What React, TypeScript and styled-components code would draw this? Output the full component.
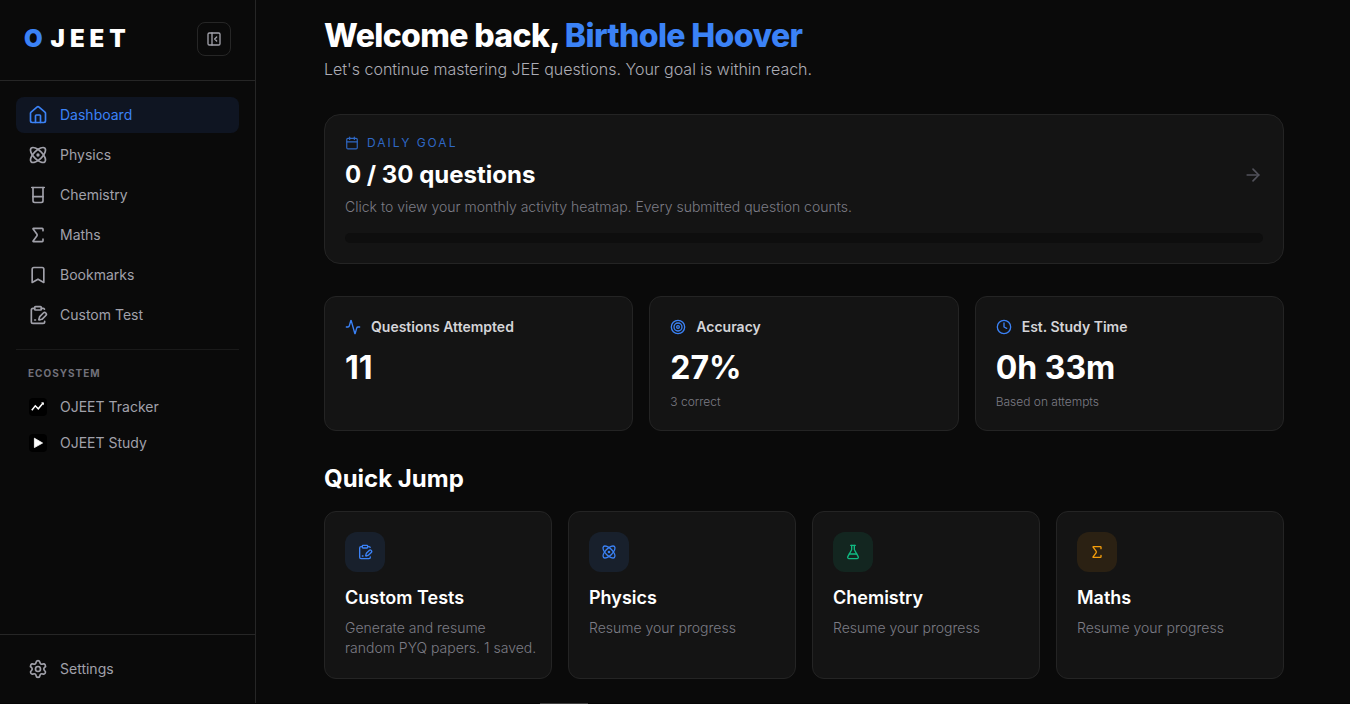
import React from "react";
import styled, { createGlobalStyle } from "styled-components";
import {
  Activity,
  ArrowRight,
  Atom,
  Beaker,
  Bookmark,
  Calendar,
  ClipboardPenLine,
  Clock,
  FlaskConical,
  House,
  PanelLeftClose,
  Settings,
  Sigma,
  Target,
  type LucideIcon,
} from "lucide-react";

const GlobalStyle = createGlobalStyle`
  *, *::before, *::after { box-sizing: border-box; }
  body {
    margin: 0;
    background: #0a0a0a;
    color: #ffffff;
    font-family: Inter, "Liberation Sans", sans-serif;
    font-size: 14px;
    line-height: 20px;
  }
  h1, h2, h3, p { margin: 0; }
  button { font: inherit; color: inherit; cursor: pointer; }
  a { color: inherit; text-decoration: none; }
`;

const Page = styled.div`
  display: flex;
  height: 100vh;
  overflow: hidden;
  border-bottom: 1px solid #050505;
`;

const Sidebar = styled.aside`
  display: flex;
  flex-direction: column;
  flex: none;
  width: 256px;
  border-right: 1px solid #262626;
`;

const SidebarHeader = styled.div`
  display: flex;
  align-items: center;
  justify-content: space-between;
  padding: 22px 24px 24px;
  border-bottom: 1px solid #262626;
`;

const Logo = styled.a`
  display: flex;
  gap: 3px;
  font-size: 24px;
  line-height: 32px;
  font-weight: 900;
  letter-spacing: 5px;
`;

const Accent = styled.span`
  color: #3b82f6;
`;

const CollapseButton = styled.button`
  display: grid;
  place-items: center;
  width: 34px;
  height: 34px;
  padding: 0;
  border: 1px solid #262626;
  border-radius: 8px;
  background: transparent;
  color: #a1a1aa;
`;

const Nav = styled.nav`
  display: flex;
  flex: 1;
  flex-direction: column;
  gap: 4px;
  padding: 16px;
`;

const NavLink = styled.a<{ $active?: boolean }>`
  display: flex;
  align-items: center;
  gap: 12px;
  padding: 8px 12px;
  border-radius: 8px;
  color: ${(p) => (p.$active ? "#3b82f6" : "#a1a1aa")};
  background: ${(p) => (p.$active ? "#0f1522" : "transparent")};

  svg { flex: none; }
`;

const Ecosystem = styled.div`
  margin-top: 12px;
  padding-top: 16px;
  border-top: 1px solid #1a1a1a;
`;

const EcosystemTitle = styled.h2`
  padding: 0 12px;
  margin-bottom: 8px;
  color: #71717a;
  font-size: 10px;
  line-height: 15px;
  font-weight: 700;
  letter-spacing: 1px;
`;

const SidebarFooter = styled.div`
  padding: 16px;
  border-top: 1px solid #262626;
`;

const Main = styled.main`
  flex: 1;
  min-width: 0;
  overflow: hidden;
`;

const Content = styled.div`
  max-width: 1024px;
  margin: 0 auto;
  padding: 16px 31px 24px 33px;
`;

const Title = styled.h1`
  font-size: 32px;
  line-height: 40px;
  font-weight: 800;
  letter-spacing: -0.02em;
`;

const Subtitle = styled.p`
  color: #acacb5;
  font-size: 16px;
  line-height: 26px;
  font-weight: 300;
`;

const surface = `
  border: 1px solid #242424;
  background: #141414;
`;

const GoalCard = styled.button`
  ${surface}
  display: block;
  width: 100%;
  margin-top: 32px;
  padding: 18px 20px 20px;
  border-radius: 16px;
  text-align: left;
`;

const GoalBody = styled.div`
  display: flex;
  align-items: center;
  justify-content: space-between;
  color: #52525b;
`;

const GoalLabel = styled.div`
  display: flex;
  align-items: center;
  gap: 8px;
  color: #2f68c5;
  font-size: 12px;
  letter-spacing: 2px;
`;

const GoalValue = styled.div`
  margin-top: 6px;
  color: #ffffff;
  font-size: 24px;
  line-height: 32px;
  font-weight: 700;
`;

const Muted = styled.p<{ $small?: boolean }>`
  color: #7c7c85;
  font-size: ${(p) => (p.$small ? 12 : 14)}px;
  line-height: ${(p) => (p.$small ? 16 : 20)}px;
  font-weight: 300;
  white-space: pre-line;
`;

const GoalHint = styled(Muted)`
  margin-top: 6px;
`;

const Track = styled.div`
  height: 10px;
  margin-top: 16px;
  border-radius: 5px;
  background: #0e0e0e;
`;

const StatGrid = styled.section`
  display: grid;
  grid-template-columns: repeat(3, minmax(0, 1fr));
  gap: 16px;
  margin-top: 32px;
`;

const StatCard = styled.article`
  ${surface}
  padding: 20px;
  border-radius: 12px;
`;

const StatLabel = styled.h2`
  display: flex;
  align-items: center;
  gap: 10px;
  color: #d4d4d8;
  font-size: 14px;
  line-height: 20px;
  font-weight: 600;

  svg { color: #3b82f6; }
`;

const StatValue = styled.div`
  margin: 12px 0 7px;
  font-size: 32px;
  line-height: 38px;
  font-weight: 700;
`;

const SectionTitle = styled.h2`
  margin-top: 32px;
  font-size: 24px;
  line-height: 32px;
  font-weight: 700;
`;

const JumpGrid = styled.section`
  display: grid;
  grid-template-columns: repeat(4, minmax(0, 1fr));
  gap: 16px;
  margin-top: 16px;
`;

const JumpCard = styled.a`
  ${surface}
  display: block;
  padding: 20px 12px 20px 20px;
  border-radius: 12px;
`;

const IconTile = styled.span<{ $color: string; $tint: string }>`
  display: grid;
  place-items: center;
  width: 40px;
  height: 40px;
  border-radius: 12px;
  color: ${(p) => p.$color};
  background: ${(p) => p.$tint};
`;

const JumpTitle = styled.h3`
  margin: 12px 0 6px;
  font-size: 18px;
  line-height: 28px;
  font-weight: 600;
`;

/* Top edge of the bottom drawer, resting just inside the window. */
const DrawerEdge = styled.div`
  position: fixed;
  bottom: 0;
  left: 40%;
  width: 48px;
  height: 1px;
  background: #404040;
`;

const navItems: { label: string; icon: LucideIcon; active?: boolean }[] = [
  { label: "Dashboard", icon: House, active: true },
  { label: "Physics", icon: Atom },
  { label: "Chemistry", icon: Beaker },
  { label: "Maths", icon: Sigma },
  { label: "Bookmarks", icon: Bookmark },
  { label: "Custom Test", icon: ClipboardPenLine },
];

const stats: { label: string; icon: LucideIcon; value: string; note?: string }[] = [
  { label: "Questions Attempted", icon: Activity, value: "11" },
  { label: "Accuracy", icon: Target, value: "27%", note: "3 correct" },
  { label: "Est. Study Time", icon: Clock, value: "0h 33m", note: "Based on attempts" },
];

const jumps: { title: string; text: string; icon: LucideIcon; color: string; tint: string }[] = [
  { title: "Custom Tests", text: "Generate and resume\nrandom PYQ papers. 1 saved.", icon: ClipboardPenLine, color: "#3b82f6", tint: "#18202c" },
  { title: "Physics", text: "Resume your progress", icon: Atom, color: "#3b82f6", tint: "#18202c" },
  { title: "Chemistry", text: "Resume your progress", icon: FlaskConical, color: "#10b981", tint: "#132620" },
  { title: "Maths", text: "Resume your progress", icon: Sigma, color: "#f59e0b", tint: "#2b2113" },
];

const TrackerIcon = () => (
  <svg width="20" height="20" viewBox="0 0 20 20" fill="none" aria-hidden="true">
    <rect x="1" y="1" width="18" height="18" rx="4" fill="#000" />
    <path d="M3.8 13.3 7.3 8.8l3 3 5-6" stroke="#fff" strokeWidth="1.5" />
    <path d="M13 5.4h2.8v2.8z" fill="#fff" />
  </svg>
);

const StudyIcon = () => (
  <svg width="20" height="20" viewBox="0 0 20 20" aria-hidden="true">
    <rect x="1" y="1" width="18" height="18" rx="4" fill="#000" />
    <path d="M6.4 5.2v9.4l8.2-4.6z" fill="#fff" stroke="#fff" strokeWidth=".8" strokeLinejoin="round" />
  </svg>
);

export default function App() {
  return (
    <>
      <GlobalStyle />
      <Page>
        <Sidebar>
          <SidebarHeader>
            <Logo href="#"><Accent>O</Accent><span>JEET</span></Logo>
            <CollapseButton type="button" aria-label="Collapse sidebar">
              <PanelLeftClose size={16} />
            </CollapseButton>
          </SidebarHeader>
          <Nav>
            {navItems.map(({ label, icon: Icon, active }) => (
              <NavLink key={label} href="#" $active={active}>
                <Icon size={20} />
                {label}
              </NavLink>
            ))}
            <Ecosystem>
              <EcosystemTitle>ECOSYSTEM</EcosystemTitle>
              <NavLink href="#"><TrackerIcon />OJEET Tracker</NavLink>
              <NavLink href="#"><StudyIcon />OJEET Study</NavLink>
            </Ecosystem>
          </Nav>
          <SidebarFooter>
            <NavLink href="#"><Settings size={20} />Settings</NavLink>
          </SidebarFooter>
        </Sidebar>
        <Main>
          <Content>
            <Title>Welcome back, <Accent>Birthole Hoover</Accent></Title>
            <Subtitle>Let's continue mastering JEE questions. Your goal is within reach.</Subtitle>
            <GoalCard type="button">
              <GoalBody>
                <div>
                  <GoalLabel><Calendar size={14} />DAILY GOAL</GoalLabel>
                  <GoalValue>0 / 30 questions</GoalValue>
                  <GoalHint>Click to view your monthly activity heatmap. Every submitted question counts.</GoalHint>
                </div>
                <ArrowRight size={20} />
              </GoalBody>
              <Track />
            </GoalCard>
            <StatGrid>
              {stats.map(({ label, icon: Icon, value, note }) => (
                <StatCard key={label}>
                  <StatLabel><Icon size={16} />{label}</StatLabel>
                  <StatValue>{value}</StatValue>
                  {note && <Muted $small>{note}</Muted>}
                </StatCard>
              ))}
            </StatGrid>
            <SectionTitle>Quick Jump</SectionTitle>
            <JumpGrid>
              {jumps.map(({ title, text, icon: Icon, color, tint }) => (
                <JumpCard key={title} href="#">
                  <IconTile $color={color} $tint={tint}><Icon size={16} /></IconTile>
                  <JumpTitle>{title}</JumpTitle>
                  <Muted>{text}</Muted>
                </JumpCard>
              ))}
            </JumpGrid>
          </Content>
        </Main>
        <DrawerEdge />
      </Page>
    </>
  );
}
